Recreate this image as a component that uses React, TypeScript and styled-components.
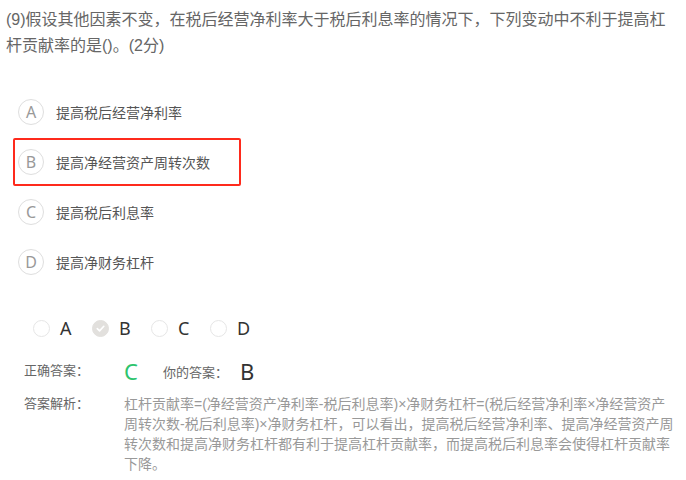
import styled, { createGlobalStyle } from "styled-components";

const GlobalStyle = createGlobalStyle`
  html, body {
    margin: 0;
    padding: 0;
    background: #fff;
  }
  body {
    font-family: "Liberation Sans", "Noto Sans CJK SC", sans-serif;
  }
`;

const options = [
  { key: "A", text: "提高税后经营净利率" },
  { key: "B", text: "提高净经营资产周转次数", marked: true },
  { key: "C", text: "提高税后利息率" },
  { key: "D", text: "提高净财务杠杆" },
];

const picked = "B";

const analysis = [
  "杠杆贡献率=(净经营资产净利率-税后利息率)×净财务杠杆=(税后经营净利率×净经营资产",
  "周转次数-税后利息率)×净财务杠杆，可以看出，提高税后经营净利率、提高净经营资产周",
  "转次数和提高净财务杠杆都有利于提高杠杆贡献率，而提高税后利息率会使得杠杆贡献率",
  "下降。",
];

export default function App() {
  return (
    <Page>
      <GlobalStyle />
      <Question>
        (9)假设其他因素不变，在税后经营净利率大于税后利息率的情况下，下列变动中不利于提高杠杆贡献率的是()。(2分)
      </Question>

      <OptionList>
        {options.map((o) => (
          <OptionRow key={o.key} $marked={!!o.marked}>
            <Badge>{o.key}</Badge>
            <OptionText>{o.text}</OptionText>
          </OptionRow>
        ))}
      </OptionList>

      <Choices>
        {options.map((o) => (
          <Choice key={o.key}>
            <Radio $checked={o.key === picked}>
              {o.key === picked && (
                <svg width="11" height="11" viewBox="0 0 12 12">
                  <path d="M2.5 6.2 L5 8.6 L9.6 3.6" fill="none" stroke="#fff" strokeWidth="1.8" strokeLinecap="round" strokeLinejoin="round" />
                </svg>
              )}
            </Radio>
            <ChoiceLetter>{o.key}</ChoiceLetter>
          </Choice>
        ))}
      </Choices>

      <AnswerRow>
        <Label>正确答案：</Label>
        <CorrectValue>C</CorrectValue>
        <YourLabel>你的答案：</YourLabel>
        <YourValue>B</YourValue>
      </AnswerRow>

      <AnalysisRow>
        <Label>答案解析：</Label>
        <AnalysisText>
          {analysis.map((line, i) => (
            <span key={i}>
              {line}
              {i < analysis.length - 1 && <br />}
            </span>
          ))}
        </AnalysisText>
      </AnalysisRow>
    </Page>
  );
}

const Page = styled.main`
  width: 686px;
  box-sizing: border-box;
  padding: 7px 2px 0 6px;
`;

const Question = styled.p`
  margin: 0;
  width: 672px;
  font-size: 16px;
  line-height: 26px;
  color: #666;
`;

const OptionList = styled.div`
  display: flex;
  flex-direction: column;
  gap: 2px;
  margin-top: 29px;
  padding-left: 7px;
`;

const OptionRow = styled.div<{ $marked: boolean }>`
  display: flex;
  align-items: center;
  gap: 12px;
  width: 228px;
  height: 48px;
  box-sizing: border-box;
  padding-left: 3px;
  border: 2px solid ${(p) => (p.$marked ? "#fe2a1c" : "transparent")};
  border-radius: 2px;
`;

const Badge = styled.span`
  width: 26px;
  height: 26px;
  box-sizing: border-box;
  border: 1px solid #dedede;
  border-radius: 50%;
  display: flex;
  align-items: center;
  justify-content: center;
  font-family: "Noto Sans", sans-serif;
  font-size: 16px;
  color: #999;
`;

const OptionText = styled.span`
  font-size: 14px;
  color: #555;
`;

const Choices = styled.div`
  display: flex;
  align-items: center;
  height: 24px;
  margin-top: 30px;
  padding-left: 27px;
`;

const Choice = styled.div`
  display: flex;
  align-items: center;
  gap: 10px;
  width: 59px;
`;

const Radio = styled.span<{ $checked: boolean }>`
  width: 17px;
  height: 17px;
  box-sizing: border-box;
  border-radius: 50%;
  border: 1px solid ${(p) => (p.$checked ? "#e2e0dd" : "#e6e6e6")};
  background: ${(p) => (p.$checked ? "#e2e0dd" : "#fff")};
  display: flex;
  align-items: center;
  justify-content: center;
`;

const ChoiceLetter = styled.span`
  font-family: "Noto Sans", sans-serif;
  font-size: 18px;
  color: #333;
`;

const AnswerRow = styled.div`
  display: flex;
  align-items: center;
  height: 28px;
  margin-top: 17px;
  padding-left: 18px;
`;

const Label = styled.span`
  flex: none;
  width: 100px;
  font-size: 13px;
  line-height: 20px;
  color: #666;
`;

const CorrectValue = styled.span`
  width: 39px;
  font-family: "Noto Sans", sans-serif;
  font-size: 22px;
  color: #2ec46d;
`;

const YourLabel = styled.span`
  font-size: 13px;
  color: #666;
`;

const YourValue = styled.span`
  margin-left: 12px;
  font-family: "Noto Sans", sans-serif;
  font-size: 22px;
  color: #333;
`;

const AnalysisRow = styled.div`
  display: flex;
  align-items: flex-start;
  margin-top: 9px;
  padding-left: 18px;
`;

const AnalysisText = styled.p`
  margin: 0;
  white-space: nowrap;
  font-size: 14px;
  line-height: 20px;
  color: #999;
`;
